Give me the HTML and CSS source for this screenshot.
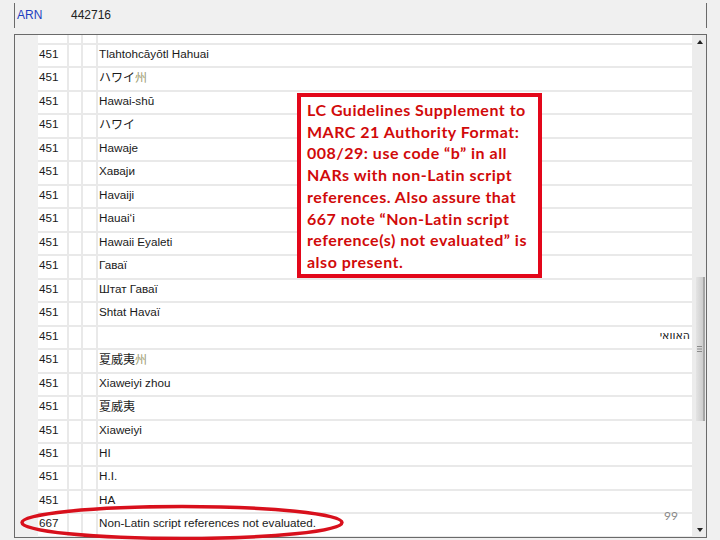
FILE: index.html
```html
<!DOCTYPE html>
<html>
<head>
<meta charset="utf-8">
<link rel="stylesheet" href="styles.css">
</head>
<body>
<div class="app">
  <div class="header"><span class="arn">ARN</span><span class="num">442716</span></div>
  <div class="panel">
    <div class="gutter"></div>
    <div class="rows">
      <div class="row top"><div class="c"></div><div class="c"></div><div class="c"></div><div class="c"></div></div>
      <div class="row"><div class="c tag">451</div><div class="c"></div><div class="c"></div><div class="c data">Tlahtohcāyōtl Hahuai</div></div>
      <div class="row"><div class="c tag">451</div><div class="c"></div><div class="c"></div><div class="c data cjk">ハワイ<span class="zhou">州</span></div></div>
      <div class="row"><div class="c tag">451</div><div class="c"></div><div class="c"></div><div class="c data">Hawai-shū</div></div>
      <div class="row"><div class="c tag">451</div><div class="c"></div><div class="c"></div><div class="c data cjk">ハワイ</div></div>
      <div class="row"><div class="c tag">451</div><div class="c"></div><div class="c"></div><div class="c data">Hawaje</div></div>
      <div class="row"><div class="c tag">451</div><div class="c"></div><div class="c"></div><div class="c data">Хаваји</div></div>
      <div class="row"><div class="c tag">451</div><div class="c"></div><div class="c"></div><div class="c data">Havaiji</div></div>
      <div class="row"><div class="c tag">451</div><div class="c"></div><div class="c"></div><div class="c data">Hauaiʻi</div></div>
      <div class="row"><div class="c tag">451</div><div class="c"></div><div class="c"></div><div class="c data">Hawaii Eyaleti</div></div>
      <div class="row"><div class="c tag">451</div><div class="c"></div><div class="c"></div><div class="c data">Гаваї</div></div>
      <div class="row"><div class="c tag">451</div><div class="c"></div><div class="c"></div><div class="c data">Штат Гаваї</div></div>
      <div class="row"><div class="c tag">451</div><div class="c"></div><div class="c"></div><div class="c data">Shtat Havaï</div></div>
      <div class="row"><div class="c tag">451</div><div class="c"></div><div class="c"></div><div class="c data rtl" dir="rtl">האוואי</div></div>
      <div class="row"><div class="c tag">451</div><div class="c"></div><div class="c"></div><div class="c data cjk">夏威夷<span class="zhou">州</span></div></div>
      <div class="row"><div class="c tag">451</div><div class="c"></div><div class="c"></div><div class="c data">Xiaweiyi zhou</div></div>
      <div class="row"><div class="c tag">451</div><div class="c"></div><div class="c"></div><div class="c data cjk">夏威夷</div></div>
      <div class="row"><div class="c tag">451</div><div class="c"></div><div class="c"></div><div class="c data">Xiaweiyi</div></div>
      <div class="row"><div class="c tag">451</div><div class="c"></div><div class="c"></div><div class="c data">HI</div></div>
      <div class="row"><div class="c tag">451</div><div class="c"></div><div class="c"></div><div class="c data">H.I.</div></div>
      <div class="row"><div class="c tag">451</div><div class="c"></div><div class="c"></div><div class="c data">HA</div></div>
      <div class="row"><div class="c tag">667</div><div class="c"></div><div class="c"></div><div class="c data">Non-Latin script references not evaluated.</div></div>
    </div>
    <div class="vscroll">
      <div class="sbtn"><svg width="6" height="4" viewBox="0 0 6 4"><path d="M0 4 L3 0 L6 4 Z" fill="#222"/></svg></div>
      <div class="track">
        <div class="thumb"><svg width="5" height="6" viewBox="0 0 5 6"><path d="M0 0.5H5M0 3H5M0 5.5H5" stroke="#8a8a8a" stroke-width="1"/></svg></div>
      </div>
      <div class="sbtn"><svg width="6" height="4" viewBox="0 0 6 4"><path d="M0 0 L3 4 L6 0 Z" fill="#222"/></svg></div>
    </div>
  </div>
</div>
<div class="note">LC Guidelines Supplement to<br>MARC 21 Authority Format:<br>008/29: use code “b” in all<br>NARs with non-Latin script<br>references. Also assure that<br>667 note “Non-Latin script<br>reference(s) not evaluated” is<br>also present.</div>
<svg class="ring" width="720" height="540" viewBox="0 0 720 540"><ellipse cx="182" cy="522.5" rx="160" ry="16" fill="none" stroke="#d8101c" stroke-width="3.5"/></svg>
<div class="pageno">99</div>
</body>
</html>
```
FILE: styles.css
```css
html, body {
  margin: 0;
  padding: 0;
}
body {
  width: 720px;
  height: 540px;
  overflow: hidden;
  background: #f0f0f0;
  font-family: "Liberation Sans", Arial, sans-serif;
  color: #1a1a1a;
  position: relative;
}
.app {
  margin-left: 14px;
  width: 693px;
}
.header {
  margin-top: 3px;
  height: 25px;
  box-sizing: border-box;
  border-left: 1px solid #6a6a6a;
  border-right: 1px solid #6a6a6a;
  padding-left: 2px;
  line-height: 25px;
  font-size: 12px;
  margin-bottom: 6px;
}
.arn {
  display: inline-block;
  width: 54px;
  color: #1f3fbf;
}
.num {
  color: #222;
}
.panel {
  display: flex;
  height: 504px;
  box-sizing: border-box;
  border: 1px solid #6a6a6a;
  background: #f0f0f0;
}
.gutter {
  width: 23px;
  background: #f0f0f0;
}
.rows {
  width: 654px;
  overflow: hidden;
  background: #e9e9e9;
}
.row {
  display: grid;
  grid-template-columns: 29px 12px 13px 594px;
  column-gap: 2px;
  height: 23.47px;
  box-sizing: border-box;
  padding-bottom: 2px;
}
.row.top {
  height: 10px;
}
.c {
  background: #fff;
  font-size: 11.7px;
  line-height: 18px;
  white-space: nowrap;
  overflow: hidden;
}
.tag {
  padding-left: 1px;
}
.data {
  padding-left: 1px;
}
.cjk {
  font-family: "Noto Sans CJK JP", "Noto Sans CJK SC", sans-serif;
  font-size: 12px;
  line-height: 18px;
}
.zhou {
  color: #9c9a6e;
}
.rtl {
  padding-left: 0;
  padding-right: 2px;
  font-family: "DejaVu Sans", sans-serif;
  font-size: 11px;
}
.vscroll {
  flex: 1;
  display: flex;
  flex-direction: column;
  background: #ececec;
}
.sbtn {
  height: 14px;
  display: flex;
  align-items: center;
  justify-content: center;
  padding-left: 2px;
}
.track {
  flex: 1;
  padding-top: 228px;
}
.thumb {
  margin-left: 4px;
  width: 7px;
  height: 144px;
  background: linear-gradient(to right, #e4e4e4, #cdcdcd);
  border-right: 2px solid #a6a6a6;
  display: flex;
  align-items: center;
  justify-content: center;
}
.note {
  position: absolute;
  left: 297px;
  top: 93px;
  width: 245px;
  height: 185px;
  box-sizing: border-box;
  border: 4px solid #e3071a;
  background: #fff;
  padding: 2px 0 0 6px;
  font-family: Lato, "Open Sans", sans-serif;
  font-weight: 700;
  font-size: 16px;
  letter-spacing: 0.5px;
  line-height: 21.7px;
  color: #d10a0a;
  white-space: nowrap;
}
.ring {
  position: absolute;
  left: 0;
  top: 0;
}
.pageno {
  position: absolute;
  left: 664px;
  top: 508px;
  font-family: Lato, sans-serif;
  font-size: 12px;
  color: #8a8a8a;
}
```
